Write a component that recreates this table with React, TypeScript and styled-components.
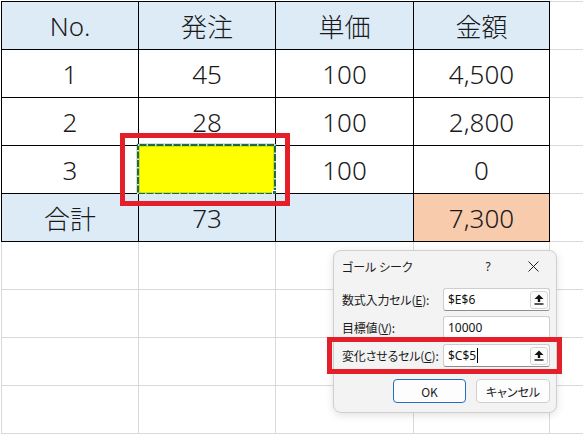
import React from "react";
import styled, { createGlobalStyle } from "styled-components";

const Global = createGlobalStyle`
  html, body { margin: 0; padding: 0; background: #fff; overflow: hidden; }
  body { font-family: "Noto Sans", "Noto Sans CJK JP", sans-serif; }
`;

const Page = styled.div`
  position: relative;
  width: 583px;
  height: 438px;
  overflow: hidden;
  box-sizing: border-box;
  padding: 1px 0 0 1px;
`;

const Sheet = styled.div`
  display: grid;
  grid-template-columns: 138px 137px 138px 136px 137px;
  grid-template-rows: 49px repeat(8, 48px);
  width: 686px;
`;

const Cell = styled.div<{ $bg?: string; $line: string; $left?: boolean; $top?: boolean }>`
  position: relative;
  box-sizing: border-box;
  background: ${(p) => p.$bg ?? "#fff"};
  border-right: 1px solid ${(p) => p.$line};
  border-bottom: 1px solid ${(p) => p.$line};
  border-left: ${(p) => (p.$left ? `1px solid ${p.$line}` : "none")};
  border-top: ${(p) => (p.$top ? `1px solid ${p.$line}` : "none")};
  display: flex;
  align-items: center;
  justify-content: center;
  font-size: 26px;
  font-weight: 300;
  color: #1a1a1a;
`;

const Ants = styled.svg`
  position: absolute;
  left: -2px;
  top: -2px;
  width: 139px;
  height: 51px;
  overflow: visible;
`;

const Handle = styled.div`
  position: absolute;
  right: -3px;
  bottom: -3px;
  width: 4px;
  height: 4px;
  background: #217346;
  border: 1px solid #fff;
`;

const Annotation = styled.div<{ $x: number; $y: number; $w: number; $h: number }>`
  position: absolute;
  left: ${(p) => p.$x}px;
  top: ${(p) => p.$y}px;
  width: ${(p) => p.$w}px;
  height: ${(p) => p.$h}px;
  box-sizing: border-box;
  border: 5px solid #e51f2a;
  z-index: 5;
  pointer-events: none;
`;

const Dialog = styled.div`
  position: absolute;
  left: 333px;
  top: 250px;
  width: 224px;
  height: 163px;
  box-sizing: border-box;
  background: #f3f3f3;
  border: 1px solid #cfcfcf;
  border-radius: 8px;
  box-shadow: 0 2px 8px rgba(0, 0, 0, 0.12);
  font-family: "Noto Sans CJK JP", sans-serif;
  font-feature-settings: "palt" 1;
  font-size: 12px;
  color: #1b1b1b;
  display: flex;
  flex-direction: column;
  padding: 0 6px 9px 8px;
`;

const TitleBar = styled.div`
  height: 30px;
  display: flex;
  align-items: center;
`;

const Title = styled.div`
  flex: 1;
  font-size: 12px;
`;

const TitleButton = styled.div`
  width: 30px;
  height: 30px;
  display: flex;
  align-items: center;
  justify-content: center;
  font-family: "Noto Sans", sans-serif;
  font-size: 12px;
  color: #222;
`;

const HelpButton = styled(TitleButton)`
  margin-right: 15px;
`;

const CloseButton = styled(TitleButton)`
  margin-right: 2px;
`;

const Form = styled.div`
  margin-top: 7px;
  display: flex;
  flex-direction: column;
  gap: 5px;
`;

const Row = styled.div`
  display: flex;
  align-items: center;
  height: 23px;
`;

const Label = styled.div`
  flex: 1;
  white-space: nowrap;
  letter-spacing: -0.2px;
`;

const Input = styled.div`
  width: 107px;
  height: 23px;
  box-sizing: border-box;
  background: #fff;
  border: 1px solid #cdcdcd;
  border-bottom-color: #8d8d8d;
  border-radius: 3px;
  display: flex;
  align-items: center;
  justify-content: space-between;
  padding: 0 1px 0 4px;
  font-family: "Noto Sans", sans-serif;
  font-size: 12px;
  color: #111;
`;

const Value = styled.span`
  display: flex;
  align-items: center;
`;

const Caret = styled.span`
  display: inline-block;
  width: 1px;
  height: 15px;
  background: #000;
  margin-left: 1px;
`;

const PickButton = styled.div`
  width: 18px;
  height: 18px;
  box-sizing: border-box;
  border: 1px solid #d5d5d5;
  border-radius: 3px;
  background: #fbfbfb;
  display: flex;
  align-items: center;
  justify-content: center;
`;

const Buttons = styled.div`
  margin-top: 12px;
  display: flex;
  justify-content: flex-end;
  gap: 10px;
`;

const Button = styled.div<{ $primary?: boolean }>`
  width: ${(p) => (p.$primary ? 73 : 74)}px;
  height: 24px;
  box-sizing: border-box;
  border: 1px solid ${(p) => (p.$primary ? "#1f6fbf" : "#d0d0d0")};
  border-radius: 4px;
  background: #fdfdfd;
  display: flex;
  align-items: center;
  justify-content: center;
  font-size: 12px;
  color: #1b1b1b;
`;

const HEAD = "#ddebf7";
const ORANGE = "#f8cbad";
const BLACK = "#000";
const GRAY = "#d9d9d9";

type CellDef = { text: string; bg?: string; selected?: boolean };

const table: CellDef[][] = [
  [
    { text: "No.", bg: HEAD },
    { text: "発注", bg: HEAD },
    { text: "単価", bg: HEAD },
    { text: "金額", bg: HEAD },
  ],
  [{ text: "1" }, { text: "45" }, { text: "100" }, { text: "4,500" }],
  [{ text: "2" }, { text: "28" }, { text: "100" }, { text: "2,800" }],
  [{ text: "3" }, { text: "", bg: "#ffff00", selected: true }, { text: "100" }, { text: "0" }],
  [
    { text: "合計", bg: HEAD },
    { text: "73", bg: HEAD },
    { text: "", bg: HEAD },
    { text: "7,300", bg: ORANGE },
  ],
];

const UploadIcon = () => (
  <svg width="10" height="11" viewBox="0 0 10 11">
    <path d="M5 0.5 L9.5 5 L6.2 5 L6.2 8 L3.8 8 L3.8 5 L0.5 5 Z" fill="#111" />
    <rect x="0.5" y="9.3" width="9" height="1.4" fill="#111" />
  </svg>
);

const CloseIcon = () => (
  <svg width="11" height="11" viewBox="0 0 11 11">
    <path d="M0.5 0.5 L10.5 10.5 M10.5 0.5 L0.5 10.5" stroke="#222" strokeWidth="1" />
  </svg>
);

export default function App() {
  const cells: React.ReactNode[] = [];
  for (let r = 0; r < 9; r++) {
    for (let c = 0; c < 5; c++) {
      const def = r < 5 && c < 4 ? table[r][c] : null;
      const line = def ? BLACK : GRAY;
      cells.push(
        <Cell key={`${r}-${c}`} $bg={def?.bg} $line={line} $left={c === 0} $top={r === 0}>
          {def?.text}
          {def?.selected && (
            <>
              <Ants viewBox="0 0 139 51">
                <rect x="1" y="1" width="137" height="49" fill="none" stroke="#1e6b3f" strokeWidth="2.4" />
                <rect
                  x="1"
                  y="1"
                  width="137"
                  height="49"
                  fill="none"
                  stroke="#ffffff"
                  strokeWidth="1.6"
                  strokeDasharray="1.5 7"
                />
              </Ants>
              <Handle />
            </>
          )}
        </Cell>
      );
    }
  }

  return (
    <Page>
      <Global />
      <Sheet>{cells}</Sheet>
      <Annotation $x={120} $y={133} $w={170} $h={73} />
      <Dialog>
        <TitleBar>
          <Title>ゴール シーク</Title>
          <HelpButton>?</HelpButton>
          <CloseButton>
            <CloseIcon />
          </CloseButton>
        </TitleBar>
        <Form>
          <Row>
            <Label>
              数式入力セル(<u>E</u>):
            </Label>
            <Input>
              <Value>$E$6</Value>
              <PickButton>
                <UploadIcon />
              </PickButton>
            </Input>
          </Row>
          <Row>
            <Label>
              目標値(<u>V</u>):
            </Label>
            <Input>
              <Value>10000</Value>
            </Input>
          </Row>
          <Row>
            <Label>
              変化させるセル(<u>C</u>):
            </Label>
            <Input>
              <Value>
                $C$5
                <Caret />
              </Value>
              <PickButton>
                <UploadIcon />
              </PickButton>
            </Input>
          </Row>
        </Form>
        <Buttons>
          <Button $primary>OK</Button>
          <Button>キャンセル</Button>
        </Buttons>
      </Dialog>
      <Annotation $x={327} $y={337} $w={235} $h={37} />
    </Page>
  );
}
